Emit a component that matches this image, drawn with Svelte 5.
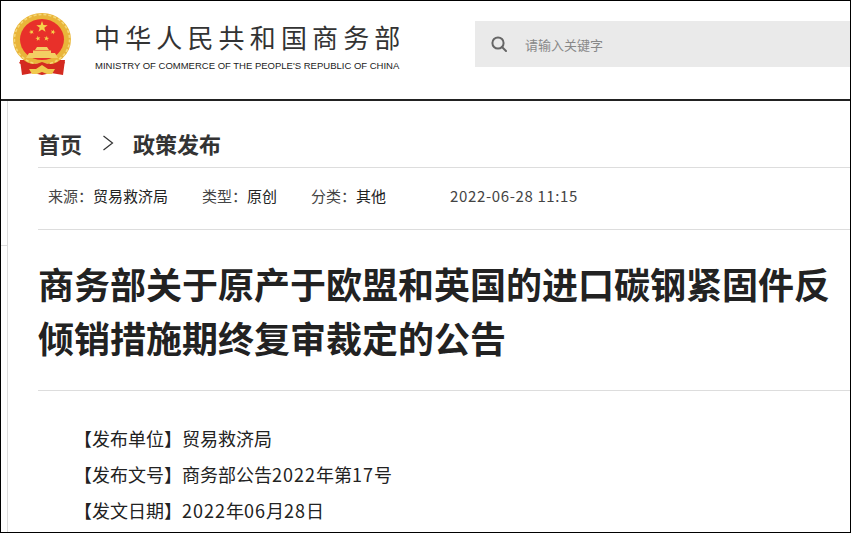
<script>
  const colon = '\uFF1A';
  const meta = [
    { label: '来源' + colon, value: '贸易救济局' },
    { label: '类型' + colon, value: '原创' },
    { label: '分类' + colon, value: '其他' }
  ];
  const info = [
    ['【发布单位】', '贸易救济局'],
    ['【发布文号】', '商务部公告2022年第17号'],
    ['【发文日期】', '2022年06月28日']
  ];
  const parts = (text) => text.split(/(\d+)/).filter(Boolean);
  const star = (cx, cy, r, rot = 0) => {
    const pts = [];
    for (let i = 0; i < 10; i++) {
      const rad = i % 2 ? r * 0.4 : r;
      const a = ((-90 + rot + i * 36) * Math.PI) / 180;
      pts.push(`${(cx + rad * Math.cos(a)).toFixed(2)},${(cy + rad * Math.sin(a)).toFixed(2)}`);
    }
    return pts.join(' ');
  };
</script>

<div class="frame">
  <header class="top">
    <svg class="emblem" width="60" height="66" viewBox="12 12 60 66" aria-label="国徽">
      <path d="M20 60 L22 75 L33 73 L42 75 L51 73 L63 75 L65 60 Z" fill="#d42a20" />
      <ellipse cx="42" cy="39.5" rx="29" ry="26.5" fill="#e9b53a" />
      <ellipse cx="42" cy="39.5" rx="27.6" ry="25" fill="none" stroke="#f5d878" stroke-width="1.6" stroke-dasharray="3 2" />
      <ellipse cx="42" cy="39.5" rx="22" ry="20.5" fill="#e8302a" />
      <polygon points={star(42, 27, 6)} fill="#f6d24a" />
      <polygon points={star(31.5, 32, 2.7, -20)} fill="#f6d24a" />
      <polygon points={star(53, 32, 2.7, 20)} fill="#f6d24a" />
      <polygon points={star(38, 38.5, 2.7, -10)} fill="#f6d24a" />
      <polygon points={star(46.5, 38.5, 2.7, 10)} fill="#f6d24a" />
      <path d="M37 47 H47 L49 50 H35 Z M33 50.5 H51 V53 H33 Z M29 53 H55 L58 58 H26 Z" fill="#f3cf63" />
      <path d="M21 60 Q32 67 42 62 Q52 67 63 60 L65 63 Q52 71 42 66 Q32 71 19 63 Z" fill="#d42a20" />
      <path d="M29 69 H36 L42 65 L48 69 H55 L52 74 H47 L42 72 L37 74 H32 Z" fill="#f0c94f" />
    </svg>
    <div class="brand">
      <div class="cn">中华人民共和国商务部</div>
      <div class="en">MINISTRY OF COMMERCE OF THE PEOPLE'S REPUBLIC OF CHINA</div>
    </div>
    <div class="search">
      <svg width="16" height="16" viewBox="0 0 16 16" fill="none" stroke="#666" stroke-width="2">
        <circle cx="7" cy="7" r="5.6" />
        <path d="M11 11 L15 15" stroke-linecap="round" />
      </svg>
      <span class="placeholder">请输入关键字</span>
    </div>
  </header>

  <span class="stub"></span>

  <main class="page">
    <nav class="crumbs">
      <span>首页</span>
      <svg width="12" height="16" viewBox="0 0 12 16" fill="none" stroke="#333" stroke-width="1.2">
        <path d="M1.5 1 L10.5 8 L1.5 15" />
      </svg>
      <span>政策发布</span>
    </nav>
    <div class="meta">
      {#each meta as m}
        <span class="item"><span class="label">{m.label}</span>{m.value}</span>
      {/each}
      <span class="date">2022-06-28 11:15</span>
    </div>
    <h1>商务部关于原产于欧盟和英国的进口碳钢紧固件反倾销措施期终复审裁定的公告</h1>
    <div class="info">
      {#each info as row}
        <p><span class="key">{row[0]}</span>{#each parts(row[1]) as part}{#if /\d/.test(part)}<span class="num">{part}</span>{:else}{part}{/if}{/each}</p>
      {/each}
    </div>
  </main>
</div>

<style>
  :global(body) {
    margin: 0;
    background: #fff;
  }
  .frame {
    position: relative;
    box-sizing: border-box;
    width: 851px;
    height: 533px;
    border: 1px solid #000;
    overflow: hidden;
    font-family: "Noto Sans CJK SC", "Liberation Sans", sans-serif;
    color: #222;
  }
  .top {
    box-sizing: border-box;
    display: flex;
    align-items: flex-start;
    height: 100px;
    border-bottom: 2px solid #222;
  }
  .emblem {
    flex: none;
    margin: 11px 0 0 11px;
    filter: blur(0.35px);
  }
  .brand {
    width: 320px;
    margin: 20px 0 0 22px;
    flex: none;
  }
  .cn {
    font-size: 26px;
    line-height: 32px;
    letter-spacing: 5.15px;
    color: #333;
    white-space: nowrap;
  }
  .en {
    margin: 6px 0 0 1px;
    font-family: "Liberation Sans", sans-serif;
    font-size: 9.5px;
    line-height: 14px;
    color: #222;
    white-space: nowrap;
  }
  .search {
    flex: none;
    box-sizing: border-box;
    display: flex;
    align-items: center;
    width: 375px;
    height: 46px;
    margin: 20px 0 0 61px;
    padding-left: 16px;
    background: #eaeaea;
  }
  .placeholder {
    margin-left: 18px;
    font-size: 13px;
    color: #888;
  }
  .stub {
    position: absolute;
    left: 0;
    top: 244px;
    width: 6px;
    height: 1px;
    background: #ddd;
  }
  .page {
    box-sizing: border-box;
    height: 431px;
    margin-left: 6px;
    border-left: 1px solid #ddd;
    padding-left: 30px;
  }
  .crumbs {
    display: flex;
    align-items: center;
    box-sizing: border-box;
    height: 67px;
    padding-top: 17px;
    border-bottom: 1px solid #ddd;
    font-size: 22px;
    font-weight: 700;
    color: #333;
  }
  .crumbs svg {
    margin: 0 19px 0 20px;
  }
  .meta {
    display: flex;
    align-items: center;
    box-sizing: border-box;
    height: 62px;
    padding: 0 0 6px 10px;
    border-bottom: 1px solid #ddd;
    font-size: 15px;
    color: #222;
  }
  .item {
    margin-right: 34px;
  }
  .label {
    color: #444;
  }
  .date {
    margin-left: 30px;
    letter-spacing: 0.63px;
    color: #444;
  }
  h1 {
    box-sizing: border-box;
    height: 161px;
    margin: 0;
    padding: 26px 0 0;
    border-bottom: 1px solid #ddd;
    font-size: 36px;
    line-height: 54px;
    font-weight: 700;
    color: #222;
  }
  .info {
    padding: 29px 0 0 36px;
    font-size: 18px;
    line-height: 36px;
    color: #222;
  }
  .info p {
    margin: 0;
    white-space: nowrap;
  }
  .num {
    letter-spacing: 1px;
  }
</style>
